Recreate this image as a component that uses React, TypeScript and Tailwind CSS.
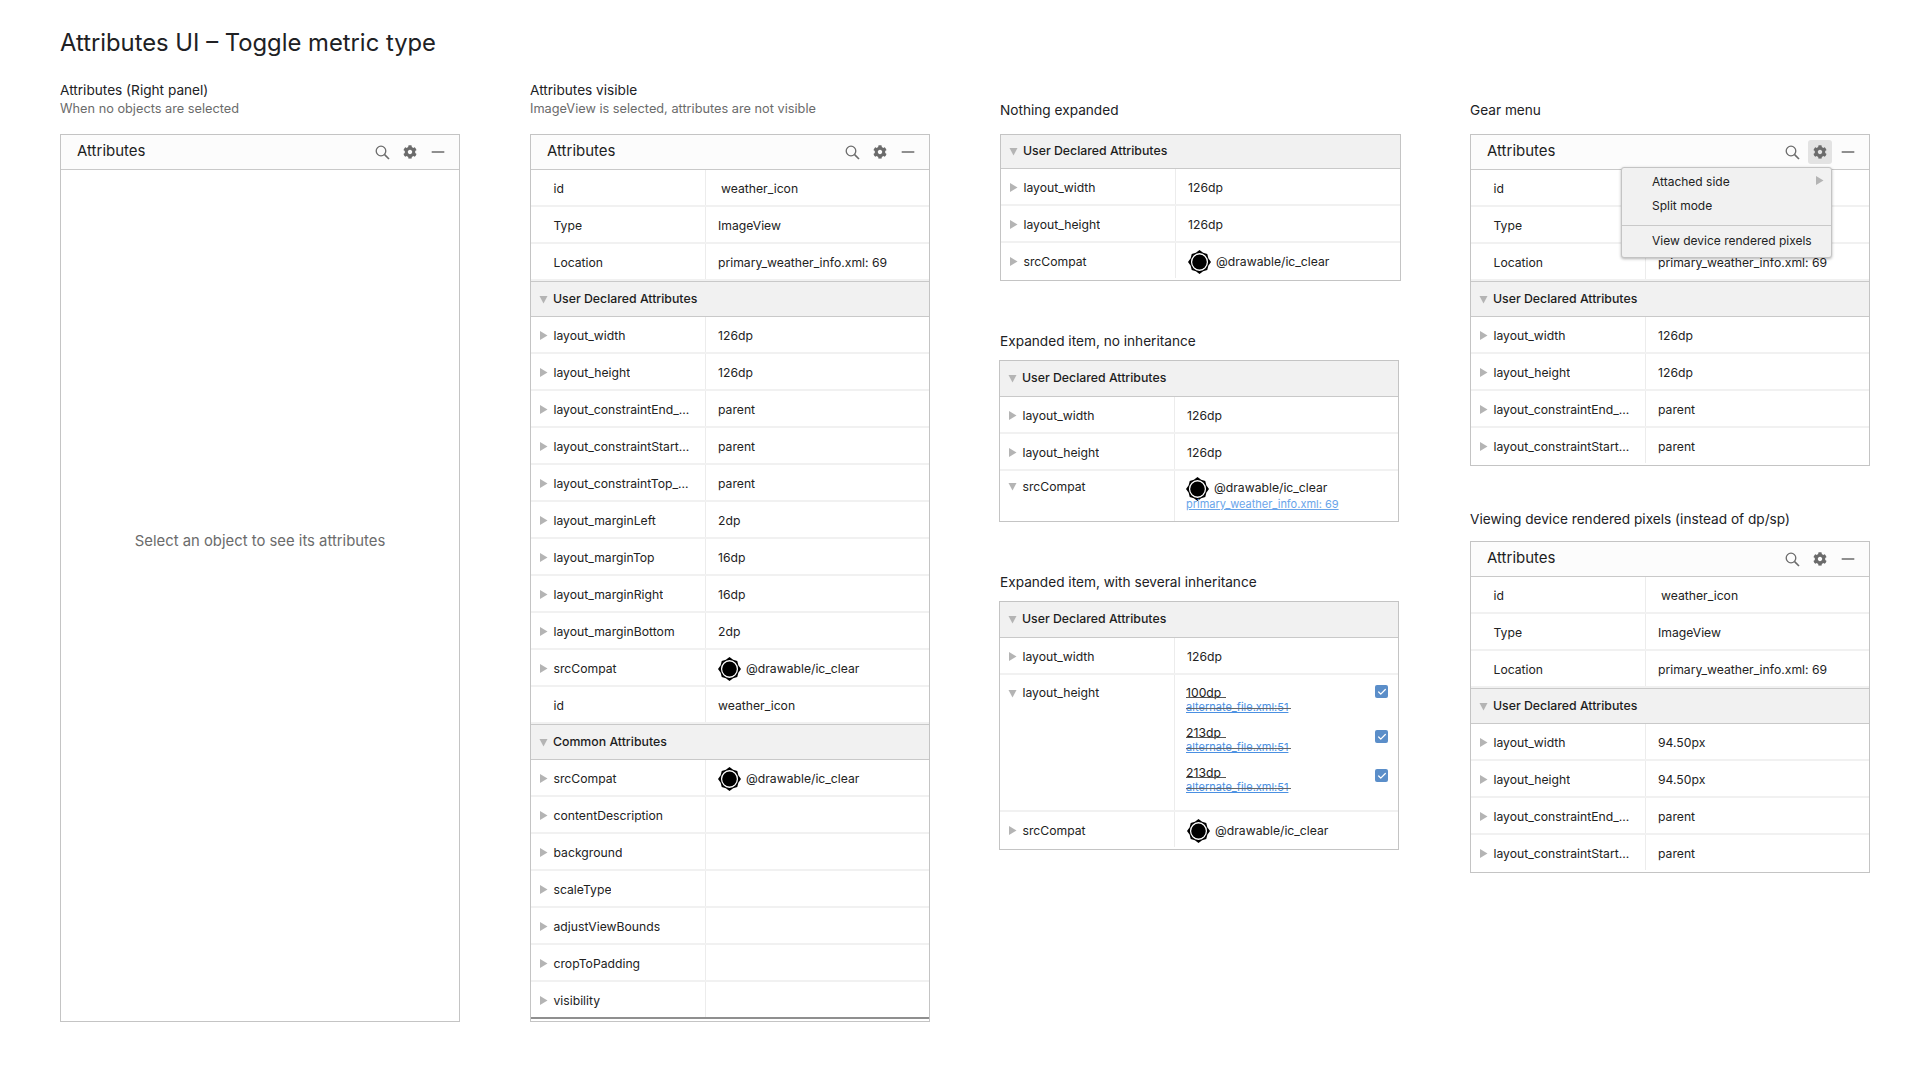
import React from 'react';
import { Minus, Check } from 'lucide-react';
import { FaCog } from 'react-icons/fa';

type Attr = {
  name: string;
  value?: string;
  arrow?: boolean;
  sun?: boolean;
  inset?: boolean;
};

const Caret = ({ open }: { open?: boolean }) => (
  <svg width="9" height="9" viewBox="0 0 9 9" className="shrink-0 fill-[#b4b4b4]">
    {open ? <path d="M.5 1h8L4.5 8.5z" /> : <path d="M1 0l7.5 4.5L1 9z" />}
  </svg>
);

const SunIcon = () => (
  <svg width="23" height="24" viewBox="0 0 24 24" preserveAspectRatio="none" className="shrink-0">
    <path
      fillRule="evenodd"
      d="M12 0L15.8 2.8L20.1 3.9L21.2 8.2L24 12L21.2 15.8L20.1 20.1L15.8 21.2L12 24L8.2 21.2L3.9 20.1L2.8 15.8L0 12L2.8 8.2L3.9 3.9L8.2 2.8ZM12 3.1a8.9 8.9 0 1 0 0 17.8a8.9 8.9 0 1 0 0-17.8z"
    />
    <circle cx="12" cy="12" r="7.6" />
  </svg>
);

const SearchIcon = () => (
  <svg width="15" height="15" viewBox="0 0 15 15" fill="none" stroke="currentColor" strokeWidth="1.3">
    <circle cx="6" cy="6" r="4.8" />
    <path d="M9.6 9.6L14 14" strokeWidth="1.6" />
  </svg>
);

const Header = ({ gearActive }: { gearActive?: boolean }) => (
  <div className="flex h-[35px] items-center justify-between border-b border-[#c9c9c9] bg-[#fcfcfc] pl-4 pr-[9px]">
    <span className="pb-[1px] text-[15px] text-[#1d1d1d]">Attributes</span>
    <div className="flex items-center gap-1 text-[#6b6b6b]">
      <span className="flex h-6 w-6 items-center justify-center">
        <SearchIcon />
      </span>
      <span className={`flex h-6 w-6 items-center justify-center rounded-[3px] ${gearActive ? 'bg-[#e3e3e3]' : ''}`}>
        <FaCog size={14} />
      </span>
      <span className="flex h-6 w-6 items-center justify-center">
        <Minus size={20} strokeWidth={1.6} />
      </span>
    </div>
  </div>
);

const Section = ({ title, first, tall }: { title: string; first?: boolean; tall?: boolean }) => (
  <div
    className={`flex items-center gap-[5px] border-b border-[#c9c9c9] bg-[#f1f1f1] pl-[8px] text-[12.3px] font-medium text-[#1d1d1d] ${
      tall ? 'h-[36px]' : first ? 'h-[34px] pb-[1px]' : 'h-[36px] border-t pt-[1px]'
    }`}
  >
    <Caret open />
    <span>{title}</span>
  </div>
);

const Row = ({ name, value, arrow = true, sun, inset }: Attr) => (
  <div className="flex h-[37px] border-b-2 border-[#f1f1f1] text-[12.2px] text-[#222222] last:border-b-transparent">
    <div className="flex w-[175px] shrink-0 items-center border-r border-[#ececec] pl-[8px] pt-[3px]">
      <span className="flex w-[14px] shrink-0 -translate-y-[1px]">{arrow && <Caret />}</span>
      <span className="truncate pl-[0.5px]">{name}</span>
    </div>
    <div className={`flex items-center gap-[5px] pt-[3px] ${inset ? 'pl-[15px]' : 'pl-[12px]'}`}>
      {sun && <SunIcon />}
      <span>{value}</span>
    </div>
  </div>
);

const Panel = ({ children, className = '' }: { children: React.ReactNode; className?: string }) => (
  <div className={`relative w-[400px] border border-[#c4c4c4] bg-white ${className}`}>{children}</div>
);

const infoRows: Attr[] = [
  { name: 'id', value: 'weather_icon', arrow: false, inset: true },
  { name: 'Type', value: 'ImageView', arrow: false },
  { name: 'Location', value: 'primary_weather_info.xml: 69', arrow: false },
];

// overridden value with the hand-drawn strike lines
const Inherited = ({ value, checkTop }: { value: string; checkTop: string }) => (
  <div className="flex h-[40px] items-start justify-between pr-[10px]">
    <div>
      <div className="relative w-fit pr-[5px] text-[12.2px] leading-[16px] text-[#222222]">
        {value}
        <span className="absolute inset-x-0 top-[12px] h-px bg-[#555555]" />
      </div>
      <div className="relative -mt-px w-fit pr-[3px] text-[11px] leading-[14px] text-[#4a90e2] underline">
        alternate_file.xml:51
        <span className="absolute inset-x-0 top-[8px] h-px bg-[#666666]" />
      </div>
    </div>
    <span className={`flex h-[13px] w-[13px] items-center justify-center rounded-[2px] bg-[#5b8ec9] ${checkTop}`}>
      <Check size={10} strokeWidth={3} className="text-white" />
    </span>
  </div>
);

export default function App() {
  return (
    <div className="min-h-[1080px] bg-white pl-[60px] pt-[28px] font-['Inter',sans-serif] text-[#202124]">
      <h1 className="text-[23.8px] leading-[30px]">Attributes UI – Toggle metric type</h1>

      <div className="mt-[22px] flex gap-[70px]">
        {/* col 1 */}
        <div className="w-[400px]">
          <p className="text-[13.65px] leading-[20px]">Attributes (Right panel)</p>
          <p className="text-[12.75px] leading-[18px] text-[#6b6b6b]">When no objects are selected</p>
          <Panel className="mt-[16px] flex h-[888px] flex-col">
            <Header />
            <div className="flex flex-1 items-center justify-center pb-[109px] text-[14.85px] text-[#6b6b6b]">
              Select an object to see its attributes
            </div>
          </Panel>
        </div>

        {/* col 2 */}
        <div className="w-[400px]">
          <p className="text-[13.65px] leading-[20px]">Attributes visible</p>
          <p className="text-[12.75px] leading-[18px] text-[#6b6b6b]">ImageView is selected, attributes are not visible</p>
          <Panel className="mt-[16px] h-[888px]">
            <Header />
            {infoRows.map((r) => <Row key={r.name} {...r} />)}
            <Section title="User Declared Attributes" />
            <Row name="layout_width" value="126dp" />
            <Row name="layout_height" value="126dp" />
            <Row name="layout_constraintEnd_..." value="parent" />
            <Row name="layout_constraintStart..." value="parent" />
            <Row name="layout_constraintTop_..." value="parent" />
            <Row name="layout_marginLeft" value="2dp" />
            <Row name="layout_marginTop" value="16dp" />
            <Row name="layout_marginRight" value="16dp" />
            <Row name="layout_marginBottom" value="2dp" />
            <Row name="srcCompat" value="@drawable/ic_clear" sun />
            <Row name="id" value="weather_icon" arrow={false} />
            <Section title="Common Attributes" />
            <Row name="srcCompat" value="@drawable/ic_clear" sun />
            <Row name="contentDescription" />
            <Row name="background" />
            <Row name="scaleType" />
            <Row name="adjustViewBounds" />
            <Row name="cropToPadding" />
            <div className="flex h-[37px] border-b-2 border-[#8f8f8f] text-[12.2px] text-[#222222]">
              <div className="flex w-[175px] shrink-0 items-center border-r border-[#ececec] pl-[8px] pt-[3px]">
                <span className="flex w-[14px] shrink-0 -translate-y-[1px]"><Caret /></span>
                <span className="pl-[0.5px]">visibility</span>
              </div>
            </div>
          </Panel>
        </div>

        {/* col 3 */}
        <div className="w-[400px]">
          <p className="pt-[20px] text-[13.65px] leading-[20px]">Nothing expanded</p>
          <Panel className="mt-[14px] w-[401px]">
            <Section title="User Declared Attributes" first />
            <Row name="layout_width" value="126dp" />
            <Row name="layout_height" value="126dp" />
            <Row name="srcCompat" value="@drawable/ic_clear" sun />
          </Panel>

          <p className="mt-[50px] text-[13.65px] leading-[20px]">Expanded item, no inheritance</p>
          <Panel className="-ml-px mt-[9px]">
            <Section title="User Declared Attributes" first tall />
            <Row name="layout_width" value="126dp" />
            <Row name="layout_height" value="126dp" />
            <div className="flex h-[50px] text-[12.2px] leading-[16px] text-[#222222]">
              <div className="flex w-[175px] shrink-0 items-start border-r border-[#ececec] pl-[8px] pt-[8px]">
                <span className="flex w-[14px] shrink-0 pt-[3px]"><Caret open /></span>
                <span className="pl-[0.5px]">srcCompat</span>
              </div>
              <div className="pl-[11px] pt-[6px]">
                <div className="flex items-center gap-[5px]">
                  <SunIcon />
                  <span className="-translate-y-[1px]">@drawable/ic_clear</span>
                </div>
                <div className="-mt-[4px] text-[11px] leading-[14px] text-[#6aa5ea] underline">primary_weather_info.xml: 69</div>
              </div>
            </div>
          </Panel>

          <p className="mt-[50px] text-[13.65px] leading-[20px]">Expanded item, with several inheritance</p>
          <Panel className="-ml-px mt-[9px]">
            <Section title="User Declared Attributes" first tall />
            <Row name="layout_width" value="126dp" />
            <div className="flex h-[137px] border-b-2 border-[#f1f1f1] text-[12.2px] leading-[16px] text-[#222222]">
              <div className="flex w-[175px] shrink-0 items-start border-r border-[#ececec] pl-[8px] pt-[10px]">
                <span className="flex w-[14px] shrink-0 pt-[4px]"><Caret open /></span>
                <span className="pl-[0.5px]">layout_height</span>
              </div>
              <div className="flex-1 pl-[11px] pt-[10px]">
                <Inherited value="100dp" checkTop="" />
                <Inherited value="213dp" checkTop="mt-[5px]" />
                <Inherited value="213dp" checkTop="mt-[4px]" />
              </div>
            </div>
            <Row name="srcCompat" value="@drawable/ic_clear" sun />
          </Panel>
        </div>

        {/* col 4 */}
        <div className="w-[400px]">
          <p className="pt-[20px] text-[13.65px] leading-[20px]">Gear menu</p>
          <Panel className="mt-[14px]">
            <div className="absolute left-[150px] top-[32px] z-10 w-[211px] rounded-[3px] border border-[#c4c4c4] bg-[#f1f1f1] pb-[2px] pt-[2px] text-[12px] text-[#222222] shadow-[0_1px_3px_rgba(0,0,0,0.3)]">
              <div className="flex h-[24px] items-center justify-between pl-[30px] pr-[7px]">
                <span>Attached side</span>
                <span className="-translate-y-[2px]"><Caret /></span>
              </div>
              <div className="flex h-[24px] items-center pl-[30px]">Split mode</div>
              <div className="mt-[7px] flex h-[30px] items-center border-t border-[#c9c9c9] pl-[30px]">View device rendered pixels</div>
            </div>
            <Header gearActive />
            {infoRows.map((r) => <Row key={r.name} {...r} />)}
            <Section title="User Declared Attributes" />
            <Row name="layout_width" value="126dp" />
            <Row name="layout_height" value="126dp" />
            <Row name="layout_constraintEnd_..." value="parent" />
            <Row name="layout_constraintStart..." value="parent" />
          </Panel>

          <p className="mt-[43px] text-[13.65px] leading-[20px]">Viewing device rendered pixels (instead of dp/sp)</p>
          <Panel className="mt-[12px]">
            <Header />
            {infoRows.map((r) => <Row key={r.name} {...r} />)}
            <Section title="User Declared Attributes" />
            <Row name="layout_width" value="94.50px" />
            <Row name="layout_height" value="94.50px" />
            <Row name="layout_constraintEnd_..." value="parent" />
            <Row name="layout_constraintStart..." value="parent" />
          </Panel>
        </div>
      </div>
    </div>
  );
}
